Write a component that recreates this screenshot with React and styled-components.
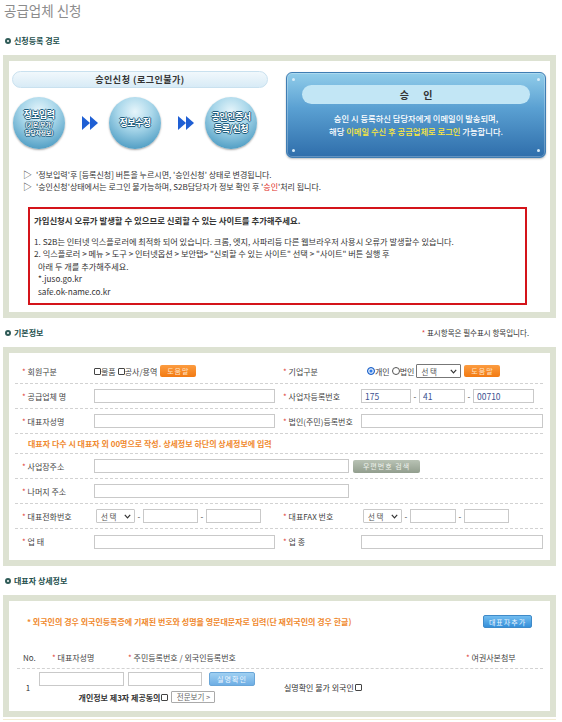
import styled, { createGlobalStyle } from 'styled-components';

const GlobalStyle = createGlobalStyle`
  body {
    margin: 0;
    background: #fff;
    font-family: "Noto Sans CJK KR", "Noto Sans", sans-serif;
    color: #333;
  }
  * { box-sizing: border-box; }
`;

// steps of the approval flow
const steps = [
  { main: ['정보입력'], sub: ['(기본/부가/', '담당자정보)'] },
  { main: ['정보수정'], sub: [] },
  { main: ['공인인증서', '등록/신청'], sub: [] },
];

const Arrow = () => (
  <ArrowSvg width="16" height="14" viewBox="0 0 16 14">
    <polygon points="0,0 8,7 0,14" fill="#1f5fd4" />
    <polygon points="8,0 16,7 8,14" fill="#1f5fd4" />
  </ArrowSvg>
);

const Chevron = () => (
  <svg width="7" height="5" viewBox="0 0 7 5">
    <polyline points="0.8,0.8 3.5,3.8 6.2,0.8" fill="none" stroke="#333" strokeWidth="1.2" />
  </svg>
);

const Select = ({ w, dark }) => (
  <SelectBox $w={w} $dark={dark}>
    <span>선 택</span>
    <Chevron />
  </SelectBox>
);

const App = () => {
  return (
    <>
      <GlobalStyle />
      <Page>
        <Title>공급업체 신청</Title>

        <HeadingRow>
          <Heading><Ring />신청등록 경로</Heading>
        </HeadingRow>
        <Panel $pad="10px 4px 7px 3px">
          <FlowRow>
            <Diagram>
              <FlowPill>승인신청 (로그인불가)</FlowPill>
              <Steps>
                {steps.map((s, i) => (
                  <StepGroup key={i}>
                    {i > 0 && <Arrow />}
                    <Ball>
                      {s.main.map((m) => (
                        <BallMain key={m}>{m}</BallMain>
                      ))}
                      {s.sub.map((m) => (
                        <BallSub key={m}>{m}</BallSub>
                      ))}
                    </Ball>
                  </StepGroup>
                ))}
              </Steps>
            </Diagram>
            <ApproveBox>
              <Dot $top $left />
              <Dot $top />
              <Dot $left />
              <Dot />
              <ApprovePill>승 인</ApprovePill>
              <ApproveText>
                승인 시 등록하신 담당자에게 이메일이 발송되며,
                <br />
                해당 <Yellow>이메일 수신 후 공급업체로 로그인</Yellow> 가능합니다.
              </ApproveText>
            </ApproveBox>
          </FlowRow>

          <Guide>
            <GuideLine><Tri>▷</Tri>'정보입력'후 [등록신청] 버튼을 누르시면, '승인신청' 상태로 변경됩니다.</GuideLine>
            <GuideLine><Tri>▷</Tri>'승인신청'상태에서는 로그인 불가능하며, S2B담당자가 정보 확인 후 '<Red>승인</Red>'처리 됩니다.</GuideLine>
          </Guide>

          <Warning>
            <WarnTitle>가입신청시 오류가 발생할 수 있으므로 신뢰할 수 있는 사이트를 추가해주세요.</WarnTitle>
            <WarnLine>1. S2B는 인터넷 익스플로러에 최적화 되어 있습니다. 크롬, 엣지, 사파리등 다른 웹브라우저 사용시 오류가 발생할수 있습니다.</WarnLine>
            <WarnLine>2. 익스플로러 &gt; 메뉴 &gt; 도구 &gt; 인터넷옵션 &gt; 보안탭&gt; "신뢰할 수 있는 사이트" 선택 &gt; "사이트" 버튼 실행 후</WarnLine>
            <WarnLine $indent>아래 두 개를 추가해주세요.</WarnLine>
            <WarnLine $indent>*.juso.go.kr</WarnLine>
            <WarnLine $indent>safe.ok-name.co.kr</WarnLine>
          </Warning>
        </Panel>

        <HeadingRow>
          <Heading><Ring />기본정보</Heading>
          <RequiredNote><Star>*</Star> 표시항목은 필수표시 항목입니다.</RequiredNote>
        </HeadingRow>
        <Panel $pad="6px 0 6px 0">
          <FormRow>
            <Label>회원구분</Label>
            <Field>
              <Check />물품 <Check $ml={2} />공사/용역
              <OrangeButton>도움말</OrangeButton>
            </Field>
            <Label>기업구분</Label>
            <Field>
              <Radio $checked $ml={6} />개인 <Radio />법인
              <Select w={45} dark />
              <OrangeButton>도움말</OrangeButton>
            </Field>
          </FormRow>
          <FormRow>
            <Label>공급업체 명</Label>
            <Field><TextInput $w={181} /></Field>
            <Label>사업자등록번호</Label>
            <Field>
              <TextInput $w={50} defaultValue="175" />
              <Dash>-</Dash>
              <TextInput $w={46} defaultValue="41" />
              <Dash>-</Dash>
              <TextInput $w={61} defaultValue="00710" />
            </Field>
          </FormRow>
          <FormRow>
            <Label>대표자성명</Label>
            <Field><TextInput $w={181} /></Field>
            <Label>법인(주민)등록번호</Label>
            <Field><TextInput $w={182} /></Field>
          </FormRow>
          <FormRow $h={20}>
            <OrangeNote $span>대표자 다수 시 대표자 외 00명으로 작성. 상세정보 하단의 상세정보에 입력</OrangeNote>
          </FormRow>
          <FormRow>
            <Label>사업장주소</Label>
            <Field $wide>
              <TextInput $w={255} />
              <GrayButton>우편번호 검색</GrayButton>
            </Field>
          </FormRow>
          <FormRow>
            <Label>나머지 주소</Label>
            <Field $wide><TextInput $w={255} /></Field>
          </FormRow>
          <FormRow>
            <Label>대표전화번호</Label>
            <Field>
              <Select w={39} />
              <Dash>-</Dash>
              <TextInput $w={55} />
              <Dash>-</Dash>
              <TextInput $w={55} />
            </Field>
            <Label>대표FAX 번호</Label>
            <Field>
              <Select w={39} />
              <Dash>-</Dash>
              <TextInput $w={46} />
              <Dash>-</Dash>
              <TextInput $w={45} />
            </Field>
          </FormRow>
          <FormRow $last>
            <Label>업 태</Label>
            <Field><TextInput $w={181} /></Field>
            <Label>업 종</Label>
            <Field><TextInput $w={182} /></Field>
          </FormRow>
        </Panel>

        <HeadingRow>
          <Heading><Ring />대표자 상세정보</Heading>
        </HeadingRow>
        <Panel $pad="13px 0 8px 0">
          <DetailTop>
            <OrangeNote>* 외국인의 경우 외국인등록증에 기재된 번호와 성명을 영문대문자로 입력(단 재외국인의 경우 한글)</OrangeNote>
            <BlueButton $w={49}>대표자추가</BlueButton>
          </DetailTop>
          <DetailHead>
            <span>No.</span>
            <span><Star>*</Star> 대표자성명</span>
            <span><Star>*</Star> 주민등록번호 / 외국인등록번호</span>
            <span><Star>*</Star> 여권사본첨부</span>
          </DetailHead>
          <DetailRow>
            <NoCell>1</NoCell>
            <InputsCell>
              <InputLine>
                <TextInput $w={85} />
                <TextInput $w={74} />
                <BlueButton $w={49} $light>실명확인</BlueButton>
              </InputLine>
              <ConsentLine>
                개인정보 제3자 제공동의<Check $ml={1} />
                <ViewButton>전문보기 &gt;</ViewButton>
              </ConsentLine>
            </InputsCell>
            <ForeignCell>실명확인 불가 외국인<Check $ml={1} /></ForeignCell>
          </DetailRow>
        </Panel>
        <Footer />
      </Page>
    </>
  );
};

const Page = styled.div`
  width: 562px;
  padding: 0 6px 0 3px;
`;

const Title = styled.h1`
  margin: 0;
  height: 26px;
  padding: 1px 0 0 1px;
  font-size: 13.5px;
  line-height: 19px;
  font-weight: 400;
  color: #8c8c8c;
`;

const HeadingRow = styled.div`
  display: flex;
  justify-content: space-between;
  align-items: center;
  padding: 8px 27px 8px 2px;
  line-height: 13px;
`;

const Heading = styled.h2`
  margin: 0;
  display: flex;
  align-items: center;
  gap: 3px;
  font-size: 8px;
  font-weight: 700;
  color: #24504d;
`;

const Ring = styled.span`
  width: 6px;
  height: 6px;
  border-radius: 50%;
  border: 2px solid #2f5b57;
`;

const RequiredNote = styled.span`
  font-size: 7.5px;
  color: #333;
`;

const Star = styled.span`
  color: #e0413a;
`;

const Red = styled.span`
  color: #e0302a;
`;

const Panel = styled.section`
  border: 6px solid #dde2d2;
  background: #fff;
  padding: ${({ $pad }) => $pad};
`;

const FlowRow = styled.div`
  display: flex;
  justify-content: space-between;
  align-items: flex-start;
`;

const Diagram = styled.div`
  width: 256px;
`;

const FlowPill = styled.div`
  height: 17px;
  border-radius: 9px;
  border: 1px solid #c9e1ef;
  background: linear-gradient(#f1f8fc, #d8ebf6);
  text-align: center;
  font-size: 9px;
  line-height: 15px;
  font-weight: 700;
  color: #333;
  letter-spacing: 0.5px;
`;

const Steps = styled.div`
  display: flex;
  align-items: center;
  margin-top: 9px;
  padding-left: 1px;
`;

const StepGroup = styled.div`
  display: flex;
  align-items: center;
`;

const ArrowSvg = styled.svg`
  margin: 0 11px 0 17px;
  flex-shrink: 0;
`;

const Ball = styled.div`
  width: 52px;
  height: 52px;
  border-radius: 50%;
  display: flex;
  flex-direction: column;
  align-items: center;
  justify-content: center;
  background: radial-gradient(circle at 50% 28%, #e6f5fb 0%, #a9d7ea 38%, #5aa4c8 78%, #3d86ad 100%);
  box-shadow: 0 1px 2px rgba(0, 0, 0, 0.35);
  color: #fff;
  text-shadow:
    -1px 0 #1f5d7d, 1px 0 #1f5d7d, 0 -1px #1f5d7d, 0 1px #1f5d7d;
`;

const BallMain = styled.span`
  font-size: 9px;
  line-height: 12px;
  font-weight: 700;
  letter-spacing: -0.5px;
`;

const BallSub = styled.span`
  font-size: 6px;
  line-height: 8px;
  font-weight: 700;
  letter-spacing: -0.3px;
`;

const ApproveBox = styled.div`
  position: relative;
  width: 260px;
  height: 86px;
  margin-top: 1px;
  border-radius: 6px;
  border: 1px solid #3f7db3;
  background: linear-gradient(180deg, #91cdea 0%, #5aa0d2 42%, #2f6eab 100%);
  box-shadow: inset 0 0 0 1px rgba(255, 255, 255, 0.25), 0 1px 2px rgba(0, 0, 0, 0.25);
  padding: 12px 15px 0;
`;

const Dot = styled.span`
  position: absolute;
  width: 3px;
  height: 3px;
  border-radius: 50%;
  background: #d7ecf8;
  top: ${({ $top }) => ($top ? '5px' : 'auto')};
  bottom: ${({ $top }) => ($top ? 'auto' : '5px')};
  left: ${({ $left }) => ($left ? '5px' : 'auto')};
  right: ${({ $left }) => ($left ? 'auto' : '5px')};
`;

const ApprovePill = styled.div`
  height: 19px;
  border-radius: 10px;
  background: #c2e6f5;
  text-align: center;
  font-size: 10px;
  line-height: 19px;
  font-weight: 700;
  color: #333;
  word-spacing: 12px;
`;

const ApproveText = styled.p`
  margin: 8px 0 0;
  text-align: center;
  font-size: 8.3px;
  line-height: 13px;
  font-weight: 500;
  color: #fff;
`;

const Yellow = styled.span`
  color: #ffe93a;
`;

const Guide = styled.div`
  margin-top: 11px;
  padding-left: 11px;
`;

const GuideLine = styled.div`
  font-size: 8px;
  line-height: 12px;
  color: #333;
`;

const Tri = styled.span`
  font-size: 9px;
  margin-right: 4px;
  color: #333;
`;

const Warning = styled.div`
  margin: 14px 19px 0 16px;
  border: 2px solid #d4141a;
  padding: 5px 4px 6px;
  font-size: 8.2px;
  color: #333;
`;

const WarnTitle = styled.div`
  font-weight: 700;
  font-size: 8.4px;
  line-height: 12px;
  margin-bottom: 9px;
`;

const WarnLine = styled.div`
  line-height: 12.4px;
  padding-left: ${({ $indent }) => ($indent ? '4px' : '0')};
`;

const FormRow = styled.div`
  display: grid;
  grid-template-columns: 72px 189px 78px 1fr;
  align-items: center;
  height: ${({ $h }) => $h || 25}px;
  margin: 0 7px 0 6px;
  padding-left: 7px;
  border-bottom: ${({ $last }) => ($last ? 'none' : '1px dashed #d2d2d2')};
`;

const Label = styled.div`
  font-size: 8px;
  color: #444;
  &::before {
    content: '* ';
    color: #e0413a;
  }
`;

const Field = styled.div`
  display: flex;
  align-items: center;
  font-size: 8px;
  color: #444;
  grid-column: ${({ $wide }) => ($wide ? '2 / 5' : 'auto')};
`;

const TextInput = styled.input`
  width: ${({ $w }) => $w}px;
  height: 14px;
  border: 1px solid #c9c9c9;
  padding: 0 3px;
  font-family: inherit;
  font-size: 8.5px;
  color: #3d5290;
  outline: none;
  flex-shrink: 0;
`;

const Dash = styled.span`
  width: 8px;
  text-align: center;
  font-size: 8px;
  color: #333;
`;

const Check = styled.span`
  display: inline-block;
  width: 7px;
  height: 7px;
  border: 1px solid #444;
  border-radius: 1px;
  background: #fff;
  margin-left: ${({ $ml }) => $ml || 0}px;
`;

const Radio = styled.span`
  display: inline-block;
  width: 8px;
  height: 8px;
  border-radius: 50%;
  border: 1px solid ${({ $checked }) => ($checked ? '#1c5fc4' : '#555')};
  background: ${({ $checked }) => ($checked ? '#2e7be8' : '#fff')};
  box-shadow: ${({ $checked }) => ($checked ? 'inset 0 0 0 1.5px #d6e6fb' : 'none')};
  margin-left: ${({ $ml }) => $ml || 2}px;
`;

const SelectBox = styled.span`
  display: inline-flex;
  align-items: center;
  justify-content: space-between;
  width: ${({ $w }) => $w}px;
  height: 14px;
  padding: 0 3px 0 4px;
  margin-left: 2px;
  border: 1px solid ${({ $dark }) => ($dark ? '#777' : '#c9c9c9')};
  border-radius: 1px;
  background: #fff;
  font-size: 7.5px;
  color: #555;
`;

const OrangeButton = styled.span`
  display: inline-block;
  width: 36px;
  height: 12px;
  margin-left: 3px;
  border-radius: 2px;
  background: linear-gradient(#fc9c40, #f27a12);
  color: #ffe3c6;
  font-size: 7px;
  line-height: 12px;
  text-align: center;
  letter-spacing: 1px;
`;

const GrayButton = styled.span`
  display: inline-block;
  width: 67px;
  height: 13px;
  margin-left: 4px;
  border-radius: 2px;
  background: linear-gradient(#b8c2b4, #929e8e);
  color: #eef2ec;
  font-size: 7px;
  line-height: 13px;
  text-align: center;
  letter-spacing: 1px;
`;

const OrangeNote = styled.div`
  font-size: 8px;
  font-weight: 700;
  color: #f0892e;
  grid-column: ${({ $span }) => ($span ? '1 / 3' : 'auto')};
  padding-left: ${({ $span }) => ($span ? '6px' : '0')};
`;

const DetailTop = styled.div`
  display: flex;
  justify-content: space-between;
  align-items: center;
  height: 15px;
  padding: 0 18px;
`;

const BlueButton = styled.span`
  display: inline-block;
  width: ${({ $w }) => $w}px;
  height: ${({ $light }) => ($light ? 14 : 13)}px;
  margin-left: ${({ $light }) => ($light ? 3 : 0)}px;
  border-radius: 2px;
  border: 1px solid ${({ $light }) => ($light ? '#6aa6d8' : '#3f8ac8')};
  background: ${({ $light }) =>
    $light ? 'linear-gradient(#9fd0f2, #6eaee4)' : 'linear-gradient(#72bdf0, #3590da)'};
  color: #edf6ff;
  font-size: 7px;
  line-height: 12px;
  text-align: center;
  letter-spacing: 1px;
`;

const DetailHead = styled.div`
  display: grid;
  grid-template-columns: 29px 76px 338px 1fr;
  align-items: center;
  height: 22px;
  margin: 18px 7px 0 8px;
  padding-left: 6px;
  border-bottom: 1px dashed #d2d2d2;
  font-size: 8px;
  color: #444;
`;

const DetailRow = styled.div`
  display: flex;
  align-items: center;
  margin: 0 7px 0 8px;
  padding-top: 3px;
  font-size: 8px;
  color: #333;
`;

const NoCell = styled.div`
  width: 22px;
  text-align: center;
`;

const InputsCell = styled.div`
  width: 216px;
`;

const InputLine = styled.div`
  display: flex;
  align-items: center;
  gap: 4px;
`;

const ConsentLine = styled.div`
  display: flex;
  align-items: center;
  justify-content: center;
  height: 12px;
  margin-top: 5px;
  font-weight: 700;
  color: #333;
`;

const ViewButton = styled.span`
  display: inline-block;
  width: 44px;
  height: 12px;
  margin-left: 3px;
  border: 1px solid #aaa;
  border-radius: 1px;
  font-size: 7.5px;
  font-weight: 400;
  line-height: 10px;
  text-align: center;
  color: #666;
`;

const ForeignCell = styled.div`
  margin-left: 29px;
  display: flex;
  align-items: center;
`;

const Footer = styled.div`
  margin-top: 2px;
  border-top: 1px solid #f3ecd2;
`;

export default App;
